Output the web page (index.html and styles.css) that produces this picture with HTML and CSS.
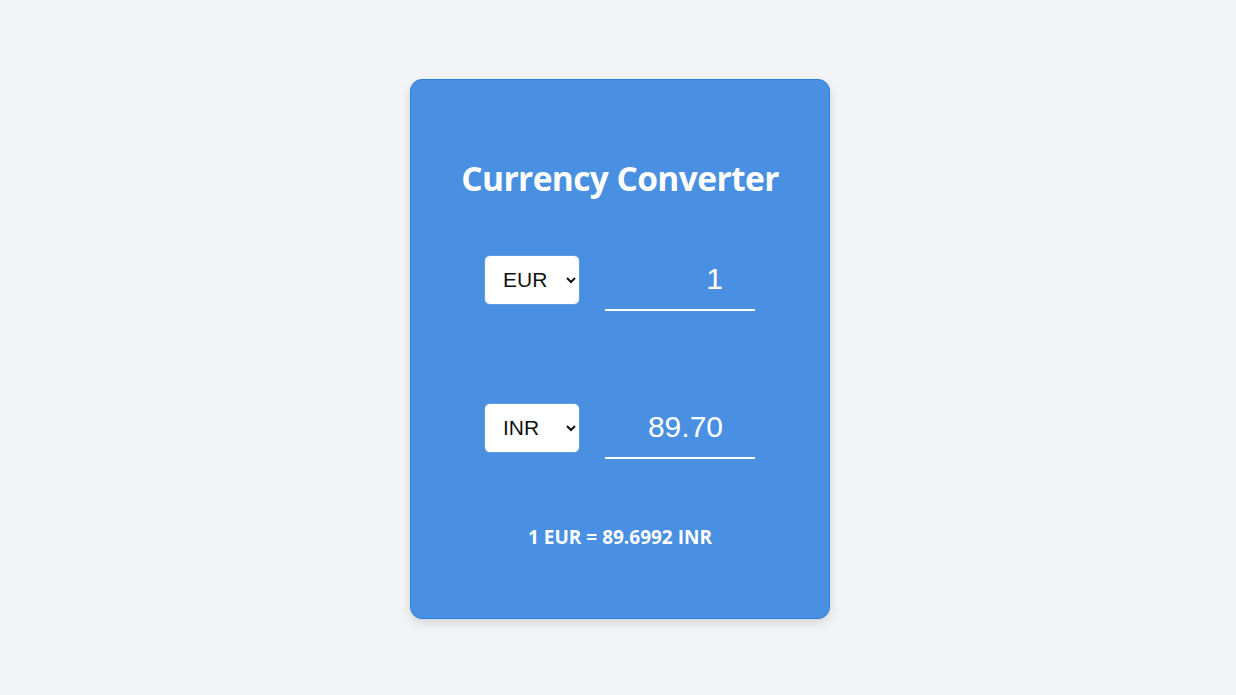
FILE: index.html
```html
<!DOCTYPE html>
<html lang="en">
<head>
<meta charset="utf-8">
<title>Currency Converter</title>
<link rel="stylesheet" href="styles.css">
</head>
<body>
<main class="page">
  <section class="card">
    <h1 class="title">Currency Converter</h1>
    <div class="row">
      <select class="currency">
        <option selected>EUR</option>
        <option>USD</option>
        <option>INR</option>
      </select>
      <input class="amount" type="text" value="1">
    </div>
    <div class="row row-second">
      <select class="currency">
        <option>EUR</option>
        <option>USD</option>
        <option selected>INR</option>
      </select>
      <input class="amount" type="text" value="89.70" readonly>
    </div>
    <p class="rate">1 EUR = 89.6992 INR</p>
  </section>
</main>
</body>
</html>
```

FILE: styles.css
```css
* { box-sizing: border-box; }
html, body { margin: 0; padding: 0; }
body {
  background: #f2f3f5;
  font-family: "Open Sans", "Noto Sans", sans-serif;
}
.page {
  width: 1236px;
  height: 695px;
  display: flex;
  align-items: center;
  justify-content: center;
  padding-left: 4px;
  padding-top: 2px;
}
.card {
  width: 420px;
  height: 540px;
  background: #4a90e2;
  border: 1px solid #2a7fdf;
  border-radius: 12px;
  box-shadow: 0 4px 10px rgba(0, 0, 0, 0.12);
  padding-top: 79px;
  display: flex;
  flex-direction: column;
  align-items: center;
}
.title {
  margin: 0 0 56px;
  height: 40px;
  line-height: 38px;
  font-size: 33.5px;
  font-weight: 700;
  color: #ffffff;
  letter-spacing: -0.6px;
}
.row {
  display: flex;
  align-items: flex-start;
  gap: 25px;
  height: 56px;
}
.row-second { margin-top: 92px; }
.currency {
  width: 96px;
  height: 50px;
  margin-left: -1px;
  font-family: "Liberation Sans", Arial, sans-serif;
  font-size: 21px;
  color: #111;
  background: #ffffff;
  border: 1px solid #5b9be6;
  border-radius: 6px;
  padding: 0 8px 0 14px;
}
.amount {
  width: 150px;
  height: 56px;
  background: transparent;
  border: none;
  border-bottom: 2px solid #ffffff;
  color: #ffffff;
  font-family: "Liberation Sans", Arial, sans-serif;
  font-size: 30px;
  text-align: right;
  padding: 0 32px 5px 0;
  outline: none;
}
.rate {
  margin: 66px 0 0;
  height: 24px;
  line-height: 24px;
  font-size: 19px;
  font-weight: 700;
  color: #ffffff;
}
```
